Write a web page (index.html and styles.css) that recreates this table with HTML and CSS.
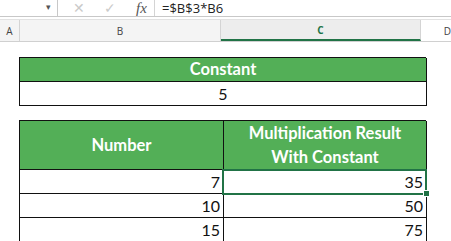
FILE: index.html
```html
<!DOCTYPE html>
<html lang="en">
<head>
    <meta charset="UTF-8">
    <title>Multiply by constant</title>
    <link rel="stylesheet" href="styles.css">
</head>
<body>
    <div class="formula-bar">
        <div class="name-box"><span class="arrow">&#9662;</span></div>
        <div class="fb-buttons">
            <span class="fb-btn">&#10005;</span>
            <span class="fb-btn">&#10003;</span>
            <span class="fx">fx</span>
        </div>
        <div class="formula">=$B$3*B6</div>
    </div>

    <div class="col-headers">
        <div class="col-head col-a">A</div>
        <div class="col-head col-b">B</div>
        <div class="col-head col-c active">C</div>
        <div class="col-head col-d">D</div>
    </div>

    <div class="sheet">
        <div class="grid const-table">
            <div class="cell head span2">Constant</div>
            <div class="cell value span2 center">5</div>
        </div>

        <div class="grid result-table">
            <div class="cell head tall">Number</div>
            <div class="cell head tall">Multiplication Result<br>With Constant</div>
            <div class="cell value">7</div>
            <div class="cell value selected">35<span class="handle"></span></div>
            <div class="cell value">10</div>
            <div class="cell value">50</div>
            <div class="cell value">15</div>
            <div class="cell value">75</div>
        </div>
    </div>
</body>
</html>
```

FILE: styles.css
```css
body {
    margin: 0;
    background: #fff;
    font-family: Lato, "Open Sans", sans-serif;
    width: 451px;
    height: 241px;
    overflow: hidden;
}

/* formula bar */
.formula-bar {
    display: flex;
    align-items: center;
    height: 16px;
    border-bottom: 1px solid #c8c8c8;
    margin-bottom: 2px;
    font-size: 13px;
    line-height: 16px;
    color: #222;
}

.name-box {
    width: 58px;
    height: 16px;
    border-right: 1px solid #c8c8c8;
    box-sizing: border-box;
    position: relative;
}

.arrow {
    position: absolute;
    left: 46px;
    top: 1px;
    font-size: 9px;
    line-height: 12px;
    color: #555;
}

.fb-buttons {
    display: flex;
    align-items: center;
    width: 97px;
    height: 16px;
    border-right: 1px solid #d4d4d4;
    box-sizing: border-box;
}

.fb-btn {
    color: #cacaca;
    font-size: 14px;
    line-height: 16px;
    margin-left: 15px;
    margin-right: 4px;
}

.fx {
    font-family: "Liberation Serif", serif;
    font-style: italic;
    font-size: 15px;
    line-height: 16px;
    color: #555;
    margin-left: 16px;
}

.formula {
    margin-left: 7px;
    font-family: "Open Sans", sans-serif;
    font-size: 13px;
}

/* column headers */
.col-headers {
    display: flex;
    height: 21px;
    border-top: 1px solid #e2e2e2;
    border-bottom: 1px solid #d0d0d0;
    background: #f4f4f4;
    font-family: "Open Sans", sans-serif;
    font-size: 10px;
    color: #444;
}

.col-head {
    display: flex;
    align-items: center;
    justify-content: center;
    border-right: 1px solid #d4d4d4;
    box-sizing: border-box;
}

.col-a { width: 20px; }
.col-b { width: 204px; }
.col-c { width: 202px; }
.col-d { flex: 1; background: #fff; border-right: none; justify-content: flex-start; padding-left: 23px; }

.col-head.active {
    color: #217346;
    font-weight: bold;
    border-bottom: 2px solid #217346;
    background: #ededed;
}

/* sheet */
.sheet {
    padding: 15px 0 0 19px;
}

.grid {
    display: grid;
    width: 407px;
    grid-template-columns: 204px 203px;
    box-sizing: border-box;
    border-left: 1px solid #111;
    border-top: 1px solid #111;
}

.result-table {
    margin-top: 14px;
}

.cell {
    border-right: 1px solid #111;
    border-bottom: 1px solid #111;
    box-sizing: border-box;
    height: 24px;
    font-size: 16px;
    line-height: 23px;
    color: #111;
}

.span2 {
    grid-column: span 2;
}

.head {
    background: #53af57;
    color: #fff;
    font-weight: bold;
    text-align: center;
    font-size: 16.5px;
}

.head.tall {
    height: 49px;
    display: flex;
    align-items: center;
    justify-content: center;
    line-height: 24px;
}

.value {
    text-align: right;
    padding-right: 3px;
}

.value.center {
    text-align: center;
    padding-right: 0;
}

.selected {
    position: relative;
}

/* active cell outline sits over the grid lines */
.selected::before {
    content: "";
    position: absolute;
    left: -2px;
    top: -1px;
    right: -1px;
    bottom: -2px;
    border: 2px solid #217346;
}

.handle {
    position: absolute;
    right: -4px;
    bottom: -4px;
    width: 5px;
    height: 5px;
    background: #217346;
    border: 1px solid #fff;
}
```
